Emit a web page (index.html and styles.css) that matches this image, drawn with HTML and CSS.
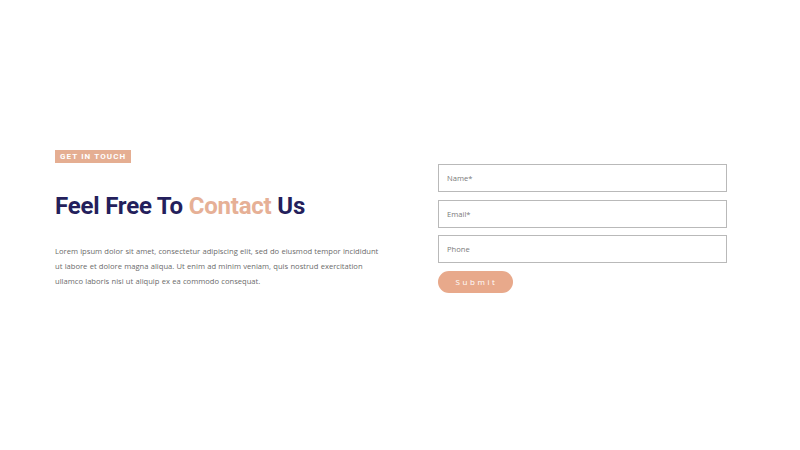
FILE: index.html
```html
<!DOCTYPE html>
<html>
<head>
<meta charset="utf-8">
<link rel="stylesheet" href="styles.css">
</head>
<body>
<section class="contact">
  <div class="intro">
    <span class="badge">GET IN TOUCH</span>
    <h1 class="title">Feel Free To <span class="accent">Contact</span> Us</h1>
    <p class="text">Lorem ipsum dolor sit amet, consectetur adipiscing elit, sed do eiusmod tempor incididunt ut labore et dolore magna aliqua. Ut enim ad minim veniam, quis nostrud exercitation ullamco laboris nisi ut aliquip ex ea commodo consequat.</p>
  </div>
  <form class="form">
    <input class="field" type="text" placeholder="Name*">
    <input class="field" type="email" placeholder="Email*">
    <input class="field" type="text" placeholder="Phone">
    <button class="submit" type="button">Submit</button>
  </form>
</section>
</body>
</html>
```
FILE: styles.css
```css
* { box-sizing: border-box; }
html, body { margin: 0; background: #fff; }
body { font-family: "Open Sans", "DejaVu Sans", sans-serif; }
.contact {
  width: 800px;
  height: 450px;
  display: flex;
  align-items: flex-start;
  padding: 150px 0 0 55px;
}
.intro {
  width: 383px;
  padding-right: 50px;
  display: flex;
  flex-direction: column;
  align-items: flex-start;
}
.badge {
  display: inline-block;
  background: #e5ae92;
  color: #fff;
  font-family: Roboto, "Liberation Sans", sans-serif;
  font-weight: 700;
  font-size: 8px;
  letter-spacing: 1.1px;
  line-height: 13px;
  height: 13px;
  padding: 0 5px;
}
.title {
  margin: 28px 0 0;
  font-family: Roboto, "Liberation Sans", sans-serif;
  font-weight: 700;
  font-size: 24px;
  line-height: 30px;
  color: #241f5c;
  letter-spacing: -0.2px;
}
.accent { color: #e6b096; }
.text {
  margin: 23px 0 0;
  font-size: 7.6px;
  line-height: 15px;
  color: #6b6b6b;
  width: 325px;
  word-spacing: 0.3px;
}
.form {
  margin-top: 14px;
  width: 289px;
  display: flex;
  flex-direction: column;
  align-items: flex-start;
  gap: 7.5px;
}
.field {
  width: 289px;
  height: 28px;
  margin: 0;
  border: 1px solid #b9b9b9;
  border-radius: 0;
  padding: 0 8px;
  font-family: "Open Sans", "DejaVu Sans", sans-serif;
  font-size: 7.6px;
  color: #555;
  outline: none;
}
.field::placeholder { color: #7a7a7a; }
.submit {
  width: 75px;
  height: 22px;
  margin-top: 0;
  border: none;
  border-radius: 11px;
  background: #e8a98b;
  color: #fff;
  font-family: "Open Sans", "DejaVu Sans", sans-serif;
  font-size: 8px;
  letter-spacing: 2.6px;
  padding: 0 0 0 2px;
}
```
